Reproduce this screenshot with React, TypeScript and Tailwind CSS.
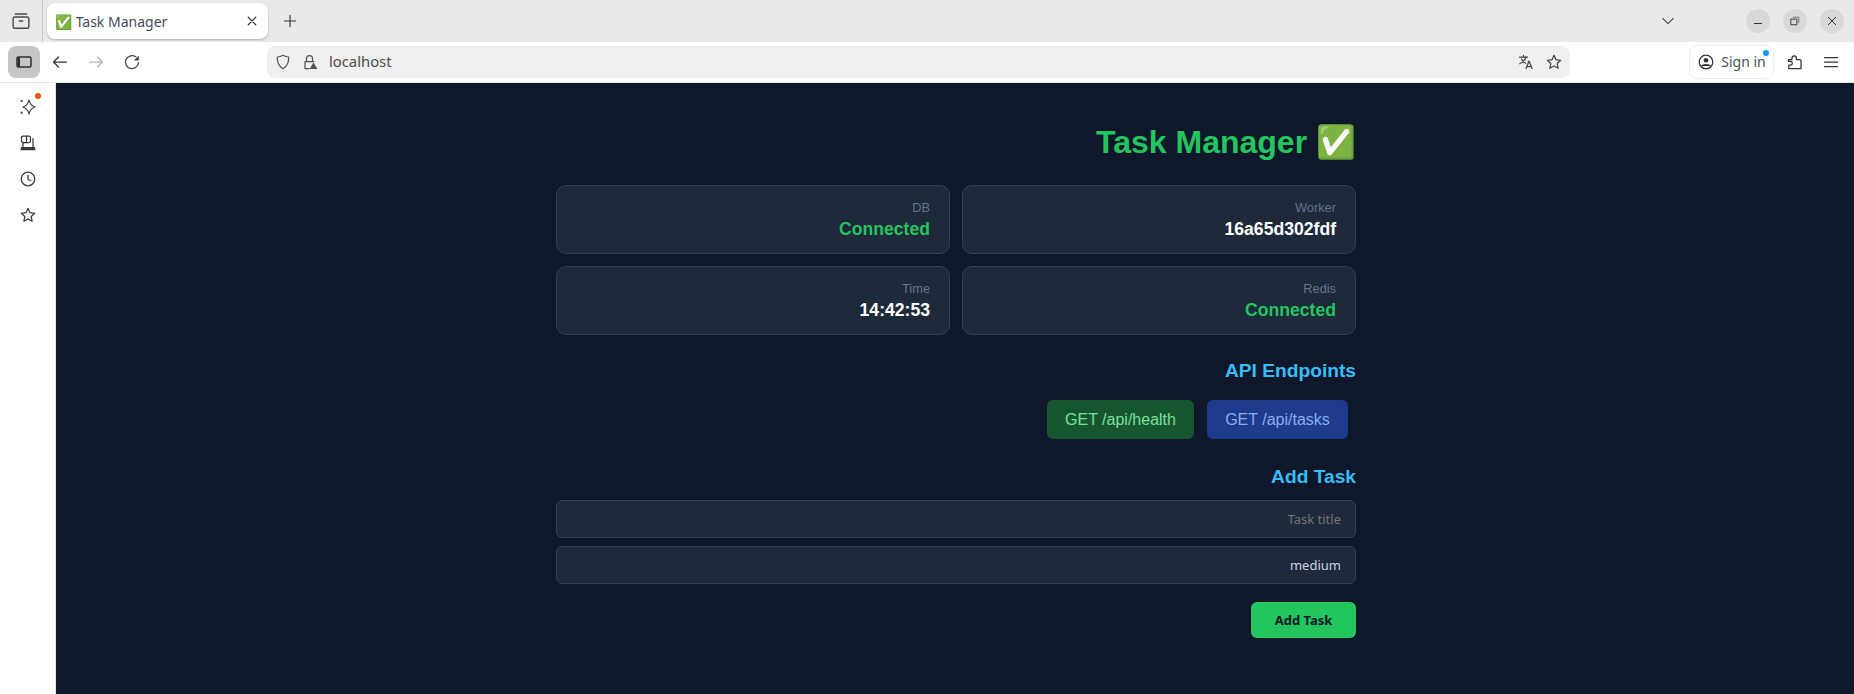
import type { ReactNode } from 'react';

const sans = 'font-["Liberation_Sans",Arial,sans-serif]';
const ui = 'font-["Noto_Sans",sans-serif]';

function Icon({ children, className = '', size = 16 }: { children: ReactNode; className?: string; size?: number }) {
  return (
    <svg
      viewBox="0 0 16 16"
      width={size}
      height={size}
      fill="none"
      stroke="currentColor"
      strokeWidth="1.25"
      strokeLinecap="round"
      strokeLinejoin="round"
      className={`shrink-0 ${className}`}
      aria-hidden
    >
      {children}
    </svg>
  );
}

function TabStrip() {
  return (
    <div className="flex h-[42px] items-center bg-[#e9e9e9]">
      <div className="flex h-full w-[43px] items-center justify-center border-r border-[#c8c8c8]">
        <Icon size={18} className="text-[#4a4a4a]">
          <rect x="1" y="4.500" width="14" height="10" rx="1.500" />
          <path d="M3 1.800h10M6.500 8h3" />
        </Icon>
      </div>
      <div className="ml-1 flex h-9 w-[221px] items-center rounded-lg bg-white pl-2 pr-2.5 shadow-[0_1px_2px_rgba(0,0,0,0.25)]">
        <span className={`flex-1 text-[14px] text-[#3f4a5a] ${ui}`}>✅ Task Manager</span>
        <Icon size={12} className="text-[#333]">
          <path d="M3 3l10 10M13 3L3 13" strokeWidth="1.600" />
        </Icon>
      </div>
      <Icon size={14} className="ml-[15px] text-[#333]">
        <path d="M8 1.500v13M1.500 8h13" />
      </Icon>
      <div className="ml-auto flex items-center">
        <Icon size={14} className="mr-[71px] text-[#444]">
          <path d="M2 5l6 6 6-6" />
        </Icon>
        <div className="mr-[13px] flex h-6 w-6 items-center justify-center rounded-full bg-[#d8d8d8]">
          <div className="mt-[5px] h-px w-2 bg-[#333]" />
        </div>
        <div className="mr-[13px] flex h-6 w-6 items-center justify-center rounded-full bg-[#d8d8d8]">
          <Icon size={10} className="text-[#333]">
            <rect x="2" y="5" width="9" height="9" strokeWidth="1.500" />
            <path d="M5.500 2H14v8.500" strokeWidth="1" />
          </Icon>
        </div>
        <div className="mr-[10px] flex h-6 w-6 items-center justify-center rounded-full bg-[#d8d8d8]">
          <Icon size={10} className="text-[#333]">
            <path d="M2 2l12 12M14 2L2 14" strokeWidth="1.600" />
          </Icon>
        </div>
      </div>
    </div>
  );
}

function Star({ className = '' }: { className?: string }) {
  return (
    <Icon size={16} className={className}>
      <path d="M8 1.300l2 4.400 4.700.6-3.500 3.200.9 4.800L8 12l-4.100 2.300.9-4.800L1.300 6.300 6 5.700z" />
    </Icon>
  );
}

function Toolbar() {
  return (
    <div className="flex h-[41px] items-center border-b border-[#e4e4e4] bg-white pb-px">
      <div className="ml-2 flex h-8 w-8 items-center justify-center rounded-lg bg-[#c6c6c6]">
        <Icon size={16} className="text-[#2f2f2f]">
          <rect x="1" y="3" width="14" height="10" rx="1.500" strokeWidth="1.500" />
          <rect x="1.500" y="3.500" width="2.500" height="9" fill="currentColor" stroke="none" />
        </Icon>
      </div>
      <Icon size={16} className="ml-3 text-[#333]">
        <path d="M14.500 8h-13M6.500 3l-5 5 5 5" />
      </Icon>
      <Icon size={16} className="ml-5 text-[#b4b4b4]">
        <path d="M1.500 8h13M9.500 3l5 5-5 5" />
      </Icon>
      <Icon size={16} className="ml-5 text-[#444]">
        <path d="M14.500 8.500A6.500 6.500 0 1 1 11.800 2.800" />
        <path d="M14.800 1.500V6.500H9.800z" fill="currentColor" stroke="none" />
      </Icon>
      <div className="ml-[127px] flex h-8 w-[1303px] items-center rounded-lg bg-[#f0f0f0] pl-2 pr-[8px]">
        <Icon size={16} className="text-[#555]">
          <path d="M8 1.300c2 1.200 3.800 1.600 5.700 1.700.2 5.500-1.500 9.400-5.700 11.700C3.800 12.400 2.100 8.500 2.300 3 4.200 2.900 6 2.500 8 1.300z" />
        </Icon>
        <Icon size={16} className="ml-[11px] text-[#555]">
          <path d="M4.500 7V4.500a3 3 0 0 1 6 0V7M7 14.500H3V7.500h9" />
          <path d="M11.500 8.500l4 6.500h-8z" fill="currentColor" stroke="none" />
        </Icon>
        <span className={`ml-[11px] text-[14.800px] text-[#4a4a4a] ${ui}`}>localhost</span>
        <Icon size={16} className="ml-auto text-[#444]">
          <path d="M1.500 3h8M5.500 1.300V3M8 3C7 6.500 4.500 8.500 1.800 9.800M3.500 5c1 2 2.500 3.500 4 4.300M8 14.500l3-7.500 3 7.500M9 12.500h4" />
        </Icon>
        <Star className="ml-3 text-[#444]" />
      </div>
      <div className="ml-[119px] flex h-[34px] w-[85px] items-center justify-center gap-[7px] rounded-lg border border-[#ebebeb] pl-px">
        <Icon size={16} className="text-[#333]">
          <circle cx="8" cy="8" r="6.800" />
          <circle cx="8" cy="6.300" r="2.300" fill="currentColor" stroke="none" />
          <path d="M3.800 12c1-2 7.400-2 8.400 0" fill="currentColor" />
        </Icon>
        <span className={`relative text-[14px] text-[#4a5260] ${ui}`}>
          Sign in
          <span className="absolute right-[-3px] top-[-1px] h-[6px] w-[6px] rounded-full bg-[#0a9dff]" />
        </span>
      </div>
      <Icon size={16} className="ml-[13px] text-[#333]">
        <path d="M1.500 5.500H5V4a2.200 2.200 0 0 1 4.400 0v1.500h3.600a1 1 0 0 1 1 1v8H1.800V11H3.500a1.800 1.800 0 0 0 0-3.600H1.500z" />
      </Icon>
      <Icon size={16} className="ml-5 text-[#333]">
        <path d="M1.500 3.500h13M1.500 8h13M1.500 12.500h13" />
      </Icon>
    </div>
  );
}

function Sidebar() {
  return (
    <div className="flex w-14 shrink-0 flex-col items-center gap-5 border-r border-[#e4e4e4] bg-white pt-4 text-[#3a3a3a]">
      <div className="relative">
        <Icon size={16}>
          <path d="M9 1c.7 3.700 1.900 5.400 6 7-4.100 1.600-5.300 3.300-6 7-.7-3.700-1.900-5.400-6-7C7.100 6.400 8.300 4.700 9 1z" />
          <circle cx="1.700" cy="1.900" r="1.200" fill="#5a5a5a" stroke="none" />
          <circle cx="1.700" cy="13.700" r="1.200" fill="#5a5a5a" stroke="none" />
        </Icon>
        <span className="absolute right-[-5px] top-[-6px] h-[6px] w-[6px] rounded-full bg-[#f0501e]" />
      </div>
      <Icon size={16}>
        <rect x="1.500" y="1" width="9" height="6.500" rx="1.500" />
        <path d="M6.500 1v6.500M3 7.500v4M13 3.500V12" />
        <path d="M1.800 12.500h12.400l.8 2.200H1z" fill="currentColor" />
      </Icon>
      <Icon size={16}>
        <circle cx="8" cy="8" r="6.800" />
        <path d="M8 4v4.200l2.800 1.500" />
      </Icon>
      <Star />
    </div>
  );
}

function StatCard({ label, value, tone }: { label: string; value: string; tone: string }) {
  return (
    <div className="h-[69px] rounded-[10px] border border-[#334155] bg-[#1e293b] px-[19px] pt-[13px] text-right">
      <div className="text-[12.8px] leading-[18px] text-[#64748b]">{label}</div>
      <div className={`text-[17.6px] leading-[24px] font-bold ${tone}`}>{value}</div>
    </div>
  );
}

export default function App() {
  return (
    <div className={`flex h-[694px] w-[1854px] flex-col overflow-hidden ${sans}`}>
      <TabStrip />
      <Toolbar />
      <div className="flex min-h-0 flex-1">
        <Sidebar />
        <main className="flex-1 bg-[#0f172a]">
          <div className="ml-[500px] w-[800px] pt-[31px]">
            <h1 className="h-[56px] text-right text-[32px] leading-[56px] font-bold text-[#22c55e]">Task Manager ✅</h1>
            <div className="mt-[15px] grid grid-cols-2 gap-x-3 gap-y-3">
              <StatCard label="DB" value="Connected" tone="text-[#22c55e]" />
              <StatCard label="Worker" value="16a65d302fdf" tone="text-white" />
              <StatCard label="Time" value="14:42:53" tone="text-white" />
              <StatCard label="Redis" value="Connected" tone="text-[#22c55e]" />
            </div>
            <h2 className="mt-[23px] text-right text-[19.2px] leading-[26px] font-bold text-[#38bdf8]">API Endpoints</h2>
            <div className="mt-[16px] flex justify-end gap-[13px] pr-[8px]">
              <span className="flex h-[39px] w-[147px] items-center justify-center rounded-[6px] bg-[#16562e] text-[16px] text-[#7ae0a0]">
                GET /api/health
              </span>
              <span className="flex h-[39px] w-[141px] items-center justify-center rounded-[6px] bg-[#1e3a8a] text-[16px] text-[#86b0f0]">
                GET /api/tasks
              </span>
            </div>
            <h2 className="mt-[25px] text-right text-[19.2px] leading-[26px] font-bold text-[#38bdf8]">Add Task</h2>
            <input
              dir="rtl"
              placeholder="Task title"
              className={`mt-[10px] block h-[38px] w-full rounded-[6px] border border-[#334155] bg-[#1e293b] px-[14px] text-[13px] outline-none placeholder:text-[#757575] ${ui}`}
            />
            <div className={`mt-[8px] flex h-[38px] items-center justify-end rounded-[6px] border border-[#334155] bg-[#1e293b] px-[14px] pt-px text-[13px] text-[#cbd5e1] ${ui}`}>
              medium
            </div>
            <div className="mt-[18px] flex justify-end">
              <button type="button" className={`h-[36px] w-[105px] rounded-[6px] bg-[#22c55e] pt-px text-[13px] font-bold text-[#0f172a] ${ui}`}>
                Add Task
              </button>
            </div>
          </div>
        </main>
      </div>
    </div>
  );
}
